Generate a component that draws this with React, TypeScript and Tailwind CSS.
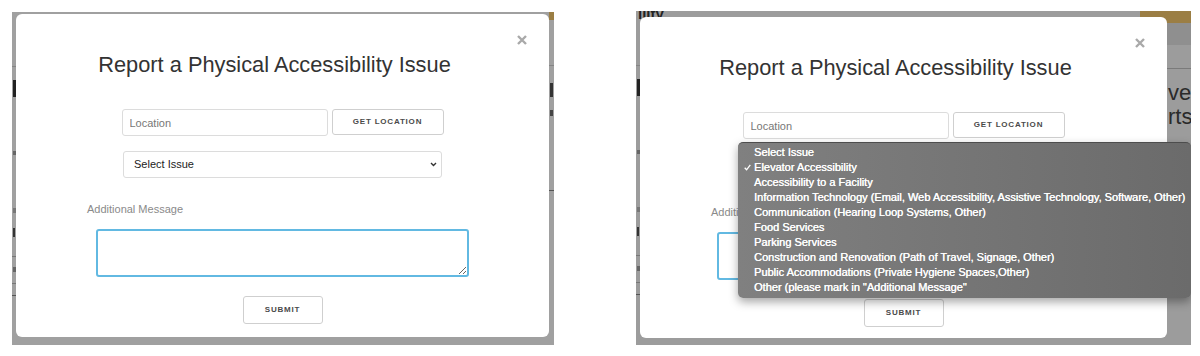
import React from "react";

const font = { fontFamily: '"Liberation Sans", Arial, sans-serif' };

const issues = [
  "Select Issue",
  "Elevator Accessibility",
  "Accessibility to a Facility",
  "Information Technology (Email, Web Accessibility, Assistive Technology, Software, Other)",
  "Communication (Hearing Loop Systems, Other)",
  "Food Services",
  "Parking Services",
  "Construction and Renovation (Path of Travel, Signage, Other)",
  "Public Accommodations (Private Hygiene Spaces,Other)",
  'Other (please mark in "Additional Message"',
];

function Modal({ width, height }: any) {
  return (
    <div
      className="relative flex flex-col items-center rounded-[6px] bg-white"
      style={{ width, height }}
    >
      {/* close */}
      <svg
        className="absolute right-[22px] top-[21px]"
        width="10"
        height="10"
        viewBox="0 0 10 10"
      >
        <path d="M1 1L9 9M9 1L1 9" stroke="#a9a9a9" strokeWidth="2.4" />
      </svg>

      <h2 className="mt-[38px] pr-4 text-[21.8px] leading-[26px] text-[#333]">
        Report a Physical Accessibility Issue
      </h2>

      <div className="mt-[31px] flex gap-[4px]">
        <input
          placeholder="Location"
          className="h-[27px] w-[206px] rounded-[3px] border border-[#dcdcdc] px-[7px] text-[11px] text-[#333] outline-none placeholder:text-[#777]"
        />
        <button className="h-[26px] w-[112px] rounded-[3px] border border-[#cfcfcf] bg-white text-[8px] font-bold tracking-[0.8px] text-[#4a4a4a]">
          GET LOCATION
        </button>
      </div>

      <div className="relative mt-[15px] h-[27px] w-[319px]">
        <select className="h-full w-full appearance-none rounded-[3px] border border-[#dcdcdc] bg-white pl-[10px] text-[11px] text-[#222] outline-none">
          {issues.map((i) => (
            <option key={i}>{i}</option>
          ))}
        </select>
        <svg
          className="pointer-events-none absolute right-[5px] top-[11px]"
          width="7"
          height="5"
          viewBox="0 0 7 5"
        >
          <path d="M1 1L3.5 3.5L6 1" fill="none" stroke="#333" strokeWidth="1.4" />
        </svg>
      </div>

      <label className="mt-[23px] ml-[71px] self-start text-[11px] leading-4 text-[#8a8a8a]">
        Additional Message
      </label>

      <textarea className="mt-[12px] h-[48px] w-[373px] rounded-[3px] border-2 border-[#62b9e2] outline-none" />

      <button className="mt-[19px] h-[28px] w-[80px] rounded-[3px] border border-[#cfcfcf] bg-white text-[8px] font-bold tracking-[0.8px] text-[#4a4a4a]">
        SUBMIT
      </button>
    </div>
  );
}

// bits of the page that show through the backdrop on the left edge
function LeftStrip() {
  return (
    <div className="flex w-[4px] shrink-0 flex-col">
      <div className="mt-[54px] h-px bg-[#858585]" />
      <div className="ml-[1px] mt-[13px] h-[17px] w-[3px] bg-[#222]" />
      <div className="ml-[1px] mt-[54px] h-[4px] w-[3px] bg-[#666]" />
      <div className="ml-[1px] mt-[53px] h-[5px] w-[3px] bg-[#777]" />
      <div className="ml-[1px] mt-[15px] h-[9px] w-[2px] bg-[#333]" />
      <div className="mt-[19px] h-px bg-[#777]" />
      <div className="ml-[1px] mt-[10px] h-[5px] w-[3px] bg-[#666]" />
      <div className="mt-[11px] h-px bg-[#777]" />
      <div className="mt-[11px] h-px bg-[#555]" />
    </div>
  );
}

export default function App() {
  return (
    <div className="flex h-[356px] w-[1200px] overflow-hidden bg-white" style={font}>
      {/* left: closed select */}
      <div className="ml-[12px] mt-[12px] flex h-[333px] w-[542px] overflow-hidden bg-[#a0a0a0]">
        <LeftStrip />
        <div className="mt-[2px]">
          <Modal width={533} height={323} />
        </div>
        <div className="flex w-[5px] shrink-0 flex-col">
          <div className="h-[8px] bg-[#9b7e44]" />
          <div className="mt-[45px] h-px bg-[#858585]" />
          <div className="ml-[1px] mt-[17px] h-[14px] w-[3px] bg-[#333]" />
          <div className="ml-[1px] mt-[13px] h-[6px] w-[3px] bg-[#444]" />
          <div className="mt-[74px] h-px bg-[#555]" />
        </div>
      </div>

      {/* right: select opened */}
      <div className="relative ml-[82px] mt-[11px] flex h-[334px] w-[555px] overflow-hidden bg-[#9c9c9c]">
        <LeftStrip />
        <div className="flex flex-col">
          <div className="flex h-[6px] items-start justify-between">
            <span className="-ml-[2px] text-[15px] font-bold leading-[6px] text-[#222]">ility</span>
            <div className="mr-[-26px] h-[12px] w-[53px] bg-[#9b7e44]" />
          </div>
          <div className="relative">
            <Modal width={527} height={321} />
          </div>
        </div>
        <div className="flex w-[24px] shrink-0 flex-col overflow-hidden">
          <div className="h-[12px] bg-[#9b7e44]" />
          <div className="h-[22px] bg-[#8f8f8f]" />
          <div className="mt-[23px] h-px bg-[#7a7a7a]" />
          <div className="mt-[12px] whitespace-nowrap pl-[1px] text-[22px] leading-[24px] text-[#2a2a2a]">
            vec
          </div>
          <div className="whitespace-nowrap pl-[1px] text-[22px] leading-[24px] text-[#2a2a2a]">
            rts
          </div>
        </div>

        {/* open native menu */}
        <div className="absolute left-[102px] top-[131px] h-[156px] w-[453px] rounded-[5px] border-t border-[#4d4d4d] bg-gradient-to-r from-[#808080] to-[#6b6b6b] pt-[2px] shadow-[0_4px_10px_rgba(0,0,0,0.35)]">
          {issues.map((i, n) => (
            <div
              key={i}
              className="flex h-[15px] items-center text-[11px] leading-[15px] text-white [text-shadow:0.3px_0_0_#fff]"
            >
              <span className="flex w-[16px] justify-center pl-[2px]">
                {n === 1 && (
                  <svg width="7" height="7" viewBox="0 0 7 7">
                    <path d="M0.7 3.8L2.6 5.8L6.3 0.8" fill="none" stroke="#fff" strokeWidth="1.3" />
                  </svg>
                )}
              </span>
              {i}
            </div>
          ))}
        </div>
      </div>
    </div>
  );
}
